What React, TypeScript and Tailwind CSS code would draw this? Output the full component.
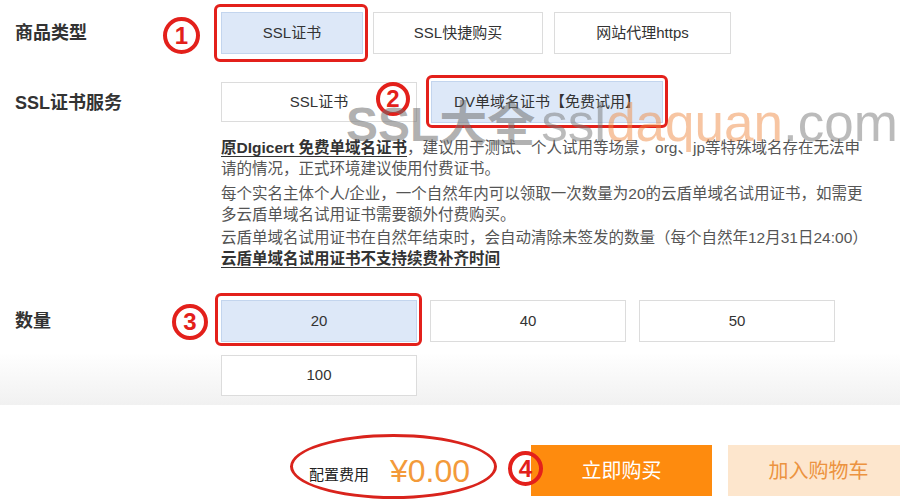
import type { ReactNode } from "react";

const Mark = ({ n, className }: { n: number; className: string }) => (
  <span
    className={`absolute flex items-center justify-center rounded-full border-4 border-[#e3201b] text-[#e3201b] font-bold text-[24px] leading-none ${className}`}
  >
    {n}
  </span>
);

const Option = ({
  children,
  selected = false,
  className = "",
}: {
  children: ReactNode;
  selected?: boolean;
  className?: string;
}) => (
  <div
    className={`flex items-center justify-center border text-[15px] text-[#333] ${
      selected ? "bg-[#dde8f8] border-[#c3d5ee]" : "bg-white border-[#dcdcdc]"
    } ${className}`}
  >
    {children}
  </div>
);

const Row = ({ label, children, className = "" }: { label: string; children: ReactNode; className?: string }) => (
  <div className={`flex ${className}`}>
    <div className="w-[221px] shrink-0 pl-[15px] h-[42px] flex items-center text-[18px] font-semibold text-[#333]">
      {label}
    </div>
    <div className="flex-1">{children}</div>
  </div>
);

export default function App() {
  return (
    <div className="relative w-[900px] h-[503px] overflow-hidden bg-white font-['Liberation_Sans','Noto_Sans_CJK_SC',sans-serif]">
      {/* form */}
      <div className="h-[405px] pt-[12px] bg-linear-to-b from-white from-[87%] to-[#f1f1f1]">
        <Row label="商品类型">
          <div className="flex gap-[10px]">
            <div className="relative">
              <Option selected className="w-[142px] h-[42px]">SSL证书</Option>
              <span className="absolute -left-[7px] -right-[5px] -top-[8px] -bottom-[8px] rounded-[6px] border-[3px] border-[#e3201b]" />
            </div>
            <Option className="w-[170px] h-[42px]">SSL快捷购买</Option>
            <Option className="w-[177px] h-[42px] ml-[1px]">网站代理https</Option>
          </div>
        </Row>

        <Row label="SSL证书服务" className="mt-[28px]">
          <div className="flex gap-[14px] mt-[-1px]">
            <Option className="w-[196px] h-[40px] mt-[1px]">SSL证书</Option>
            <div className="relative">
              <Option selected className="w-[232px] h-[42px]">DV单域名证书【免费试用】</Option>
              <span className="absolute -left-[5px] -right-[5px] -top-[6px] -bottom-[5px] rounded-[6px] border-[3px] border-[#e3201b]" />
            </div>
          </div>
          <div className="mt-[14px] w-[670px] text-[15.5px] leading-[21px] text-[#555]">
            <p>
              <span className="font-bold text-[#333] underline underline-offset-[3px]">原DIgicert 免费单域名证书</span>
              ，建议用于测试、个人试用等场景，org、jp等特殊域名存在无法申
              <br />
              请的情况，正式环境建议使用付费证书。
            </p>
            <p className="mt-[4px]">
              每个实名主体个人/企业，一个自然年内可以领取一次数量为20的云盾单域名试用证书，如需更
              <br />
              多云盾单域名试用证书需要额外付费购买。
            </p>
            <p className="mt-[2px]">云盾单域名试用证书在自然年结束时，会自动清除未签发的数量（每个自然年12月31日24:00）</p>
            <p>
              <span className="font-bold text-[#333] underline underline-offset-[3px]">云盾单域名试用证书不支持续费补齐时间</span>
            </p>
          </div>
        </Row>

        <Row label="数量" className="mt-[31px]">
          <div className="grid grid-cols-[196px_196px_196px] gap-[13px]">
            <div className="relative">
              <Option selected className="h-[42px]">20</Option>
              <span className="absolute -left-[6px] -right-[5px] -top-[7px] -bottom-[4px] rounded-[6px] border-[3px] border-[#e3201b]" />
            </div>
            <Option className="h-[42px]">40</Option>
            <Option className="h-[42px]">50</Option>
            <Option className="h-[41px]">100</Option>
          </div>
        </Row>
      </div>

      {/* bottom bar */}
      <div className="h-[98px] bg-white flex items-start pl-[309px] pt-[40px]">
        <div className="flex items-center h-[51px] shrink-0">
          <span className="text-[15px] text-[#222] mt-[10px]">配置费用</span>
          <span className="ml-[21px] text-[32px] text-[#f39a3a] leading-none">¥0.00</span>
        </div>
        <button className="ml-[61px] shrink-0 w-[181px] h-[51px] bg-[#fe8b0e] text-white text-[20px]">立即购买</button>
        <button className="ml-[16px] shrink-0 w-[181px] h-[51px] bg-[#fde6cd] text-[#ec9340] text-[20px]">加入购物车</button>
      </div>

      {/* annotations */}
      <Mark n={1} className="left-[163px] top-[17px] w-[37px] h-[37px]" />
      <Mark n={2} className="left-[376px] top-[82px] w-[34px] h-[34px]" />
      <Mark n={3} className="left-[172px] top-[304px] w-[36px] h-[36px]" />
      <Mark n={4} className="left-[508px] top-[451px] w-[35px] h-[35px]" />
      <span className="absolute left-[290px] top-[434px] w-[207px] h-[65px] rounded-[50%] border-[3px] border-[#d9231c]" />

      {/* watermark */}
      <div className="pointer-events-none absolute left-[346px] top-[96px] w-[560px] flex items-baseline leading-none whitespace-nowrap">
        <span className="text-[48px] font-bold text-[rgba(110,110,110,0.55)]">SSL大全</span>
        <span className="ml-[6px] text-[53px] text-[rgba(120,120,120,0.5)]">ssl</span>
        <span className="text-[53px] text-[rgba(240,140,70,0.5)]">daquan</span>
        <span className="text-[53px] text-[rgba(120,120,120,0.5)]">.com</span>
      </div>
    </div>
  );
}
